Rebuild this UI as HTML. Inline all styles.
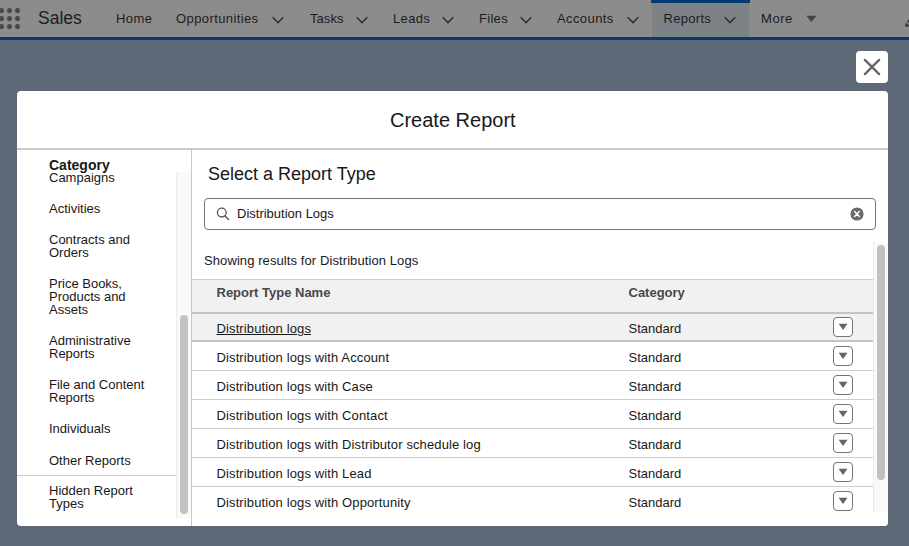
<!DOCTYPE html>
<html><head><meta charset="utf-8">
<style>
*{box-sizing:border-box;margin:0;padding:0}
html,body{width:909px;height:546px;overflow:hidden;background:#5e6977;font-family:"Liberation Sans",sans-serif;color:#181818}
.abs{position:absolute}
#nav{position:absolute;left:0;top:0;width:909px;height:37px;background:#8c8c8c}
#navline{position:absolute;left:0;top:36px;width:909px;height:1px;background:#928f8c}
#blue{position:absolute;left:0;top:37px;width:909px;height:3px;background:#063a73}
.dot{position:absolute;width:5px;height:5px;border-radius:50%;background:#484848}
.nt{position:absolute;top:11px;font-size:13px;line-height:16px;color:#1c1c1c;white-space:nowrap}
.chev{position:absolute;top:16px;width:12px;height:8px}
#active{position:absolute;left:652px;top:0;width:97px;height:37px;background:#7d8287}
#activetop{position:absolute;left:651px;top:0;width:99px;height:3px;background:#063a73}
#modal{position:absolute;left:17px;top:91px;width:871px;height:435px;background:#fff;border-radius:4px;overflow:hidden}
#close{position:absolute;left:856px;top:51px;width:32px;height:32px;background:#fff;border-radius:4px}
.btn{width:20px;height:20px;border:1px solid #747474;border-radius:4px;background:#fff;overflow:hidden}
.btn svg{position:absolute;left:-1px;top:-1px}
.t13{font-size:13px;line-height:13px;white-space:nowrap;position:absolute}
</style></head><body>

<div id="nav"></div><div id="navline"></div><div id="blue"></div>
<div class="dot" style="left:-1px;top:8px"></div>
<div class="dot" style="left:7px;top:8px"></div>
<div class="dot" style="left:15px;top:8px"></div>
<div class="dot" style="left:-1px;top:16px"></div>
<div class="dot" style="left:7px;top:16px"></div>
<div class="dot" style="left:15px;top:16px"></div>
<div class="dot" style="left:-1px;top:24px"></div>
<div class="dot" style="left:7px;top:24px"></div>
<div class="dot" style="left:15px;top:24px"></div>
<div class="abs" style="left:38px;top:8px;font-size:17.5px;line-height:20px;color:#1e1e1e;white-space:nowrap">Sales</div>
<div id="active"></div><div id="activetop"></div>
<div class="nt" style="left:116px;letter-spacing:0.45px">Home</div>
<div class="nt" style="left:176px;letter-spacing:0.4px">Opportunities</div>
<div class="nt" style="left:310px;letter-spacing:0.05px">Tasks</div>
<div class="nt" style="left:393px;letter-spacing:0.35px">Leads</div>
<div class="nt" style="left:479px;letter-spacing:0.3px">Files</div>
<div class="nt" style="left:557px;letter-spacing:0.4px">Accounts</div>
<div class="nt" style="left:663.5px;letter-spacing:0.3px">Reports</div>
<div class="nt" style="left:761px;letter-spacing:0.55px">More</div>
<svg class="chev" style="left:272px" viewBox="0 0 12 8"><path d="M0.6 1.2 L6 6.6 L11.4 1.2" fill="none" stroke="#303030" stroke-width="1.5"/></svg>
<svg class="chev" style="left:356px" viewBox="0 0 12 8"><path d="M0.6 1.2 L6 6.6 L11.4 1.2" fill="none" stroke="#303030" stroke-width="1.5"/></svg>
<svg class="chev" style="left:442px" viewBox="0 0 12 8"><path d="M0.6 1.2 L6 6.6 L11.4 1.2" fill="none" stroke="#303030" stroke-width="1.5"/></svg>
<svg class="chev" style="left:520px" viewBox="0 0 12 8"><path d="M0.6 1.2 L6 6.6 L11.4 1.2" fill="none" stroke="#303030" stroke-width="1.5"/></svg>
<svg class="chev" style="left:627px" viewBox="0 0 12 8"><path d="M0.6 1.2 L6 6.6 L11.4 1.2" fill="none" stroke="#303030" stroke-width="1.5"/></svg>
<svg class="chev" style="left:724px" viewBox="0 0 12 8"><path d="M0.6 1.2 L6 6.6 L11.4 1.2" fill="none" stroke="#303030" stroke-width="1.5"/></svg>
<svg class="abs" style="left:806px;top:15px" width="11" height="8" viewBox="0 0 11 8"><path d="M0.3 0.8 L10.5 0.8 L5.4 7 Z" fill="#444"/></svg>
<svg class="abs" style="left:900px;top:14px" width="9" height="16" viewBox="900 14 9 16"><path d="M905 26.4 L905.9 22.4 L909 25.2 L909 26.4 Z" fill="#333"/><path d="M907 21.2 L909 19.4 L909 23.2 Z" fill="#333"/></svg>
<div id="close"><svg width="32" height="32" viewBox="0 0 32 32"><path d="M8.9 8.9 L23.1 23.1 M23.1 8.9 L8.9 23.1" stroke="#666" stroke-width="2.4" stroke-linecap="round"/></svg></div>
<div id="modal">
<div class="abs" style="left:373px;top:18px;font-size:20px;line-height:22px;white-space:nowrap">Create Report</div>
<div class="abs" style="left:0px;top:57px;width:871px;height:2px;background:#c9c9c9"></div>
<div class="abs" style="left:174px;top:59px;width:1px;height:380px;background:#c9c9c9"></div>
<div class="abs" style="left:159px;top:81px;width:15px;height:346px;background:#f9f9f9;border-left:1px solid #ececec"></div>
<div class="abs" style="left:163px;top:224px;width:8px;height:199px;background:#c1c1c1;border-radius:4px"></div>
<div class="t13" style="left:32px;top:80px">Campaigns</div>
<div class="t13" style="left:32px;top:111px">Activities</div>
<div class="t13" style="left:32px;top:142px">Contracts and<br>Orders</div>
<div class="t13" style="left:32px;top:186px">Price Books,<br>Products and<br>Assets</div>
<div class="t13" style="left:32px;top:243px">Administrative<br>Reports</div>
<div class="t13" style="left:32px;top:287px">File and Content<br>Reports</div>
<div class="t13" style="left:32px;top:331px">Individuals</div>
<div class="t13" style="left:32px;top:363px">Other Reports</div>
<div class="t13" style="left:32px;top:393px">Hidden Report<br>Types</div>
<div class="abs" style="left:0px;top:384px;width:159px;height:1px;background:#c9c9c9"></div>
<div class="abs" style="left:32px;top:66px;font-size:14px;line-height:16px;font-weight:bold;white-space:nowrap">Category</div>
<div class="abs" style="left:191px;top:73px;font-size:18px;line-height:20px;white-space:nowrap">Select a Report Type</div>
<div class="abs" style="left:187px;top:107px;width:672px;height:32px;border:1px solid #747474;border-radius:4px"></div>
<svg class="abs" style="left:197px;top:113px" width="18" height="18" viewBox="0 0 18 18"><circle cx="7.8" cy="8.6" r="4.4" fill="none" stroke="#555" stroke-width="1.3"/><path d="M11 12 L14.6 15.6" stroke="#555" stroke-width="1.4" stroke-linecap="round"/></svg>
<div class="t13" style="left:220px;top:116px">Distribution Logs</div>
<svg class="abs" style="left:833px;top:116px" width="14" height="14" viewBox="0 0 14 14"><circle cx="7" cy="7" r="6.6" fill="#6b6b6b"/><path d="M4.6 4.6 L9.4 9.4 M9.4 4.6 L4.6 9.4" stroke="#fff" stroke-width="1.4" stroke-linecap="round"/></svg>
<div class="t13" style="left:187px;top:163px;letter-spacing:0.09px">Showing results for Distribution Logs</div>
<div class="abs" style="left:175px;top:188px;width:681px;height:1px;background:#cdcdcd"></div>
<div class="abs" style="left:175px;top:189px;width:681px;height:32px;background:#f1f1f1"></div>
<div class="abs" style="left:175px;top:221px;width:681px;height:2px;background:#c4c4c4"></div>
<div class="t13" style="left:199.5px;top:195px;font-weight:bold;color:#484848">Report Type Name</div>
<div class="t13" style="left:611.5px;top:195px;font-weight:bold;color:#484848">Category</div>
<div class="abs" style="left:175px;top:223px;width:681px;height:26px;background:#f1f1f1"></div>
<div class="abs" style="left:175px;top:249px;width:681px;height:2px;background:#c4c4c4"></div>
<div class="t13" style="left:199.5px;top:231px;letter-spacing:0.12px;text-decoration:underline;">Distribution logs</div>
<div class="t13" style="left:611.5px;top:231px">Standard</div>
<div class="abs btn" style="left:816px;top:226px"><svg width="20" height="20" viewBox="0 0 20 20"><path d="M5.6 6.8 L14.5 6.8 L10.05 12.9 Z" fill="#666"/></svg></div>
<div class="t13" style="left:199.5px;top:260px;letter-spacing:0.12px;">Distribution logs with Account</div>
<div class="t13" style="left:611.5px;top:260px">Standard</div>
<div class="abs btn" style="left:816px;top:255px"><svg width="20" height="20" viewBox="0 0 20 20"><path d="M5.6 6.8 L14.5 6.8 L10.05 12.9 Z" fill="#666"/></svg></div>
<div class="abs" style="left:175px;top:279px;width:681px;height:1px;background:#cdcdcd"></div>
<div class="t13" style="left:199.5px;top:289px;letter-spacing:0.12px;">Distribution logs with Case</div>
<div class="t13" style="left:611.5px;top:289px">Standard</div>
<div class="abs btn" style="left:816px;top:284px"><svg width="20" height="20" viewBox="0 0 20 20"><path d="M5.6 6.8 L14.5 6.8 L10.05 12.9 Z" fill="#666"/></svg></div>
<div class="abs" style="left:175px;top:308px;width:681px;height:1px;background:#cdcdcd"></div>
<div class="t13" style="left:199.5px;top:318px;letter-spacing:0.12px;">Distribution logs with Contact</div>
<div class="t13" style="left:611.5px;top:318px">Standard</div>
<div class="abs btn" style="left:816px;top:313px"><svg width="20" height="20" viewBox="0 0 20 20"><path d="M5.6 6.8 L14.5 6.8 L10.05 12.9 Z" fill="#666"/></svg></div>
<div class="abs" style="left:175px;top:337px;width:681px;height:1px;background:#cdcdcd"></div>
<div class="t13" style="left:199.5px;top:347px;letter-spacing:0.12px;">Distribution logs with Distributor schedule log</div>
<div class="t13" style="left:611.5px;top:347px">Standard</div>
<div class="abs btn" style="left:816px;top:342px"><svg width="20" height="20" viewBox="0 0 20 20"><path d="M5.6 6.8 L14.5 6.8 L10.05 12.9 Z" fill="#666"/></svg></div>
<div class="abs" style="left:175px;top:366px;width:681px;height:1px;background:#cdcdcd"></div>
<div class="t13" style="left:199.5px;top:376px;letter-spacing:0.12px;">Distribution logs with Lead</div>
<div class="t13" style="left:611.5px;top:376px">Standard</div>
<div class="abs btn" style="left:816px;top:371px"><svg width="20" height="20" viewBox="0 0 20 20"><path d="M5.6 6.8 L14.5 6.8 L10.05 12.9 Z" fill="#666"/></svg></div>
<div class="abs" style="left:175px;top:395px;width:681px;height:1px;background:#cdcdcd"></div>
<div class="t13" style="left:199.5px;top:405px;letter-spacing:0.12px;">Distribution logs with Opportunity</div>
<div class="t13" style="left:611.5px;top:405px">Standard</div>
<div class="abs btn" style="left:816px;top:400px"><svg width="20" height="20" viewBox="0 0 20 20"><path d="M5.6 6.8 L14.5 6.8 L10.05 12.9 Z" fill="#666"/></svg></div>
<div class="abs" style="left:175px;top:421px;width:696px;height:14px;background:#fff"></div>
<div class="abs" style="left:856px;top:151px;width:15px;height:270px;background:#f9f9f9;border-left:1px solid #ececec"></div>
<div class="abs" style="left:860px;top:154px;width:8px;height:235px;background:#c1c1c1;border-radius:4px"></div>
</div>
</body></html>
